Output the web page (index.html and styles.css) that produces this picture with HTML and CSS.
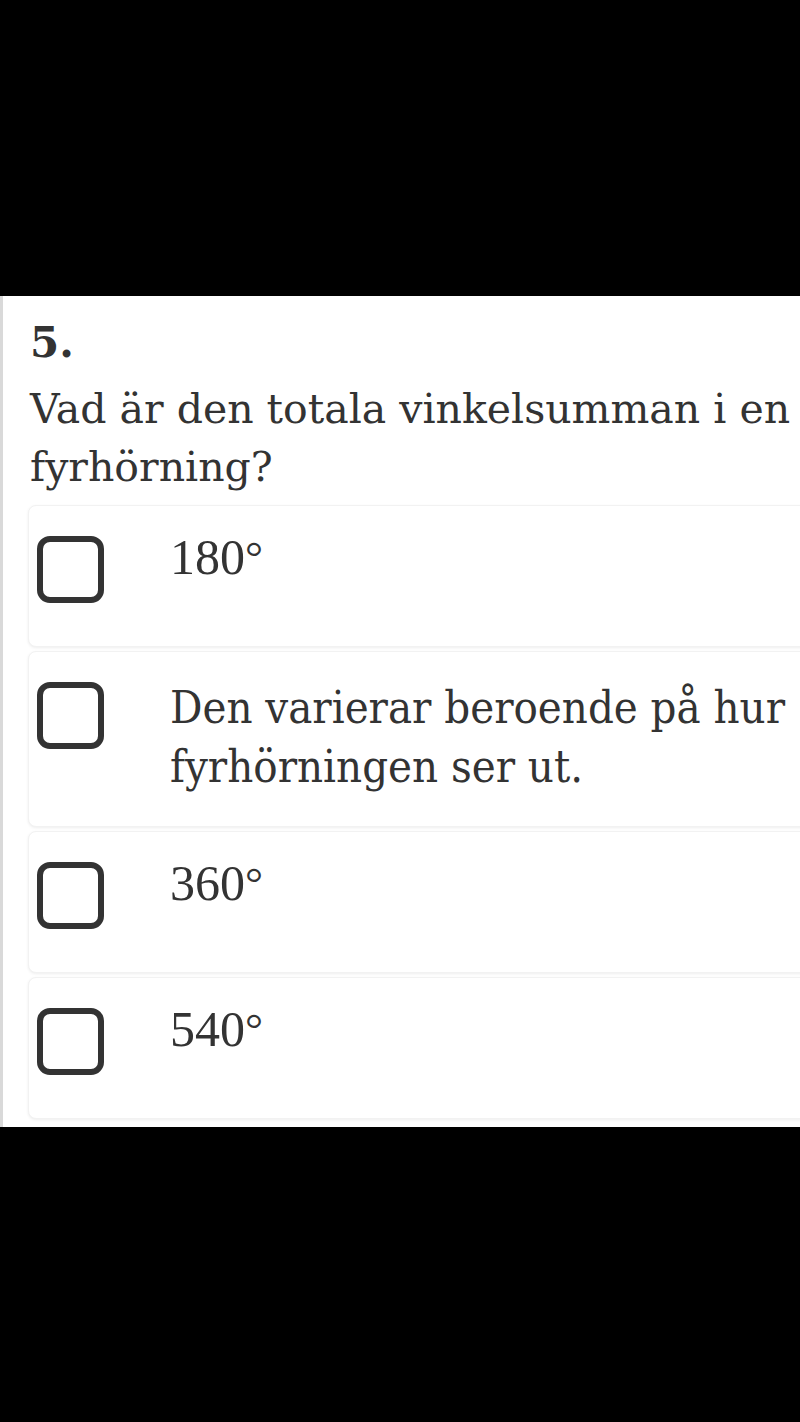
FILE: index.html
```html
<!DOCTYPE html>
<html lang="sv">
<head>
<meta charset="utf-8">
<link rel="stylesheet" href="styles.css">
</head>
<body>
<div class="top"></div>
<main class="sheet">
  <div class="qnum">5.</div>
  <div class="qtext">Vad är den totala vinkelsumman i en fyrhörning?</div>
  <div class="options">
    <div class="card"><span class="box"></span><span class="opt math">180<span class="deg">°</span></span></div>
    <div class="card"><span class="box"></span><span class="opt">Den varierar beroende på hur fyrhörningen ser ut.</span></div>
    <div class="card"><span class="box"></span><span class="opt math">360<span class="deg">°</span></span></div>
    <div class="card"><span class="box"></span><span class="opt math">540<span class="deg">°</span></span></div>
  </div>
</main>
<div class="bottom"></div>
</body>
</html>
```

FILE: styles.css
```css
html, body {
  margin: 0;
  padding: 0;
  background: #000;
}
body {
  width: 800px;
  height: 1422px;
  overflow: hidden;
  font-family: "DejaVu Serif", "Liberation Serif", serif;
  color: #333;
}
.top {
  height: 296px;
  background: #000;
}
.sheet {
  background: #fff;
  border-left: 3px solid #d9d9d9;
  height: 831px;
  box-sizing: border-box;
  padding: 18px 0 0 25px;
  overflow: hidden;
}
.qnum {
  font-size: 42px;
  font-weight: bold;
  line-height: 58px;
  padding-left: 2px;
}
.qtext {
  font-size: 41px;
  line-height: 58px;
  margin-top: 8px;
  padding-left: 2px;
}
.options {
  margin-top: 9px;
  display: flex;
  flex-direction: column;
  gap: 4px;
}
.card {
  display: flex;
  align-items: flex-start;
  margin-right: -30px;
  padding: 26px 0 30px 8px;
  min-height: 84px;
  border-radius: 8px;
  box-shadow: 0 1px 3px rgba(0,0,0,0.07);
  border: 1px solid #f2f2f2;
  background: #fff;
}
.box {
  flex: none;
  width: 67px;
  height: 67px;
  margin-top: 4px;
  box-sizing: border-box;
  border: 6px solid #333;
  border-radius: 13px;
}
.opt {
  margin-left: 66px;
  font-size: 45px;
  line-height: 59px;
  font-stretch: condensed;
  font-family: "DejaVu Serif Condensed", "DejaVu Serif", serif;
}
.opt.math {
  font-family: "Liberation Serif", serif;
  font-size: 50px;
  font-stretch: normal;
  margin-top: -4px;
}
.deg {
  font-size: 0.9em;
  vertical-align: 0.05em;
}
.bottom {
  height: 295px;
  background: #000;
}
```
